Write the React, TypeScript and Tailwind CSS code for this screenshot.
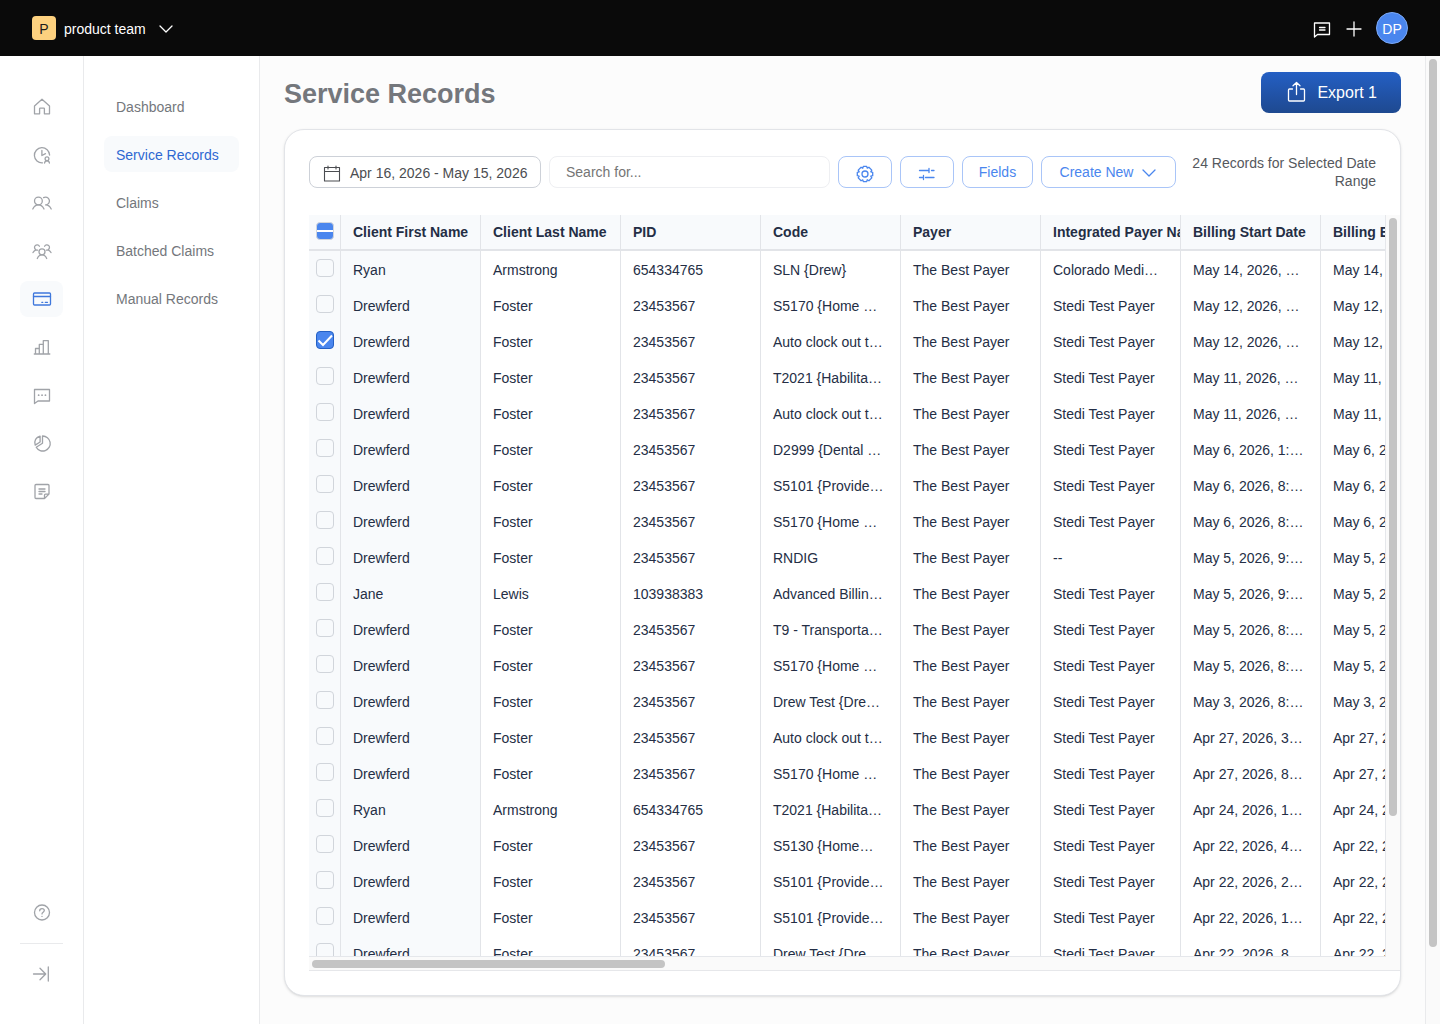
import React, { useState } from 'react';

interface RecordRow {
    first: string;
    last: string;
    pid: string;
    code: string;
    integrated: string;
    start: string;
}

const drewferd = (code: string, start: string, integrated = 'Stedi Test Payer'): RecordRow => ({
    first: 'Drewferd',
    last: 'Foster',
    pid: '23453567',
    code,
    integrated,
    start,
});

const initialRows: RecordRow[] = [
    { first: 'Ryan', last: 'Armstrong', pid: '654334765', code: 'SLN {Drew}', integrated: 'Colorado Medi…', start: 'May 14, 2026, …' },
    drewferd('S5170 {Home …', 'May 12, 2026, …'),
    drewferd('Auto clock out t…', 'May 12, 2026, …'),
    drewferd('T2021 {Habilita…', 'May 11, 2026, …'),
    drewferd('Auto clock out t…', 'May 11, 2026, …'),
    drewferd('D2999 {Dental …', 'May 6, 2026, 1:…'),
    drewferd('S5101 {Provide…', 'May 6, 2026, 8:…'),
    drewferd('S5170 {Home …', 'May 6, 2026, 8:…'),
    drewferd('RNDIG', 'May 5, 2026, 9:…', '--'),
    { first: 'Jane', last: 'Lewis', pid: '103938383', code: 'Advanced Billin…', integrated: 'Stedi Test Payer', start: 'May 5, 2026, 9:…' },
    drewferd('T9 - Transporta…', 'May 5, 2026, 8:…'),
    drewferd('S5170 {Home …', 'May 5, 2026, 8:…'),
    drewferd('Drew Test {Dre…', 'May 3, 2026, 8:…'),
    drewferd('Auto clock out t…', 'Apr 27, 2026, 3…'),
    drewferd('S5170 {Home …', 'Apr 27, 2026, 8…'),
    { first: 'Ryan', last: 'Armstrong', pid: '654334765', code: 'T2021 {Habilita…', integrated: 'Stedi Test Payer', start: 'Apr 24, 2026, 1…' },
    drewferd('S5130 {Home…', 'Apr 22, 2026, 4…'),
    drewferd('S5101 {Provide…', 'Apr 22, 2026, 2…'),
    drewferd('S5101 {Provide…', 'Apr 22, 2026, 1…'),
    drewferd('Drew Test {Dre…', 'Apr 22, 2026, 8…'),
];

const columns = ['Client First Name', 'Client Last Name', 'PID', 'Code', 'Payer', 'Integrated Payer Name', 'Billing Start Date', 'Billing End Date'];

const Icon: React.FC<{ children: React.ReactNode; className?: string }> = ({ children, className = 'w-5 h-5' }) => (
    <svg className={className} viewBox="0 0 20 20" fill="none" stroke="currentColor" strokeWidth={1.3} strokeLinecap="round" strokeLinejoin="round" aria-hidden="true">
        {children}
    </svg>
);

const Chevron: React.FC<{ className?: string }> = ({ className = 'w-4 h-4' }) => (
    <svg className={className} viewBox="0 0 16 16" fill="none" stroke="currentColor" strokeWidth={1.3} strokeLinecap="round" strokeLinejoin="round" aria-hidden="true">
        <path d="M2 6l6 6 6-6" />
    </svg>
);

const railItems = [
    {
        label: 'Home',
        icon: <path d="M2.5 9L10 2.2 17.500 9v7.800h-5.100v-5a.6.6 0 0 0-.6-.6H8.200a.6.6 0 0 0-.6.6v5H2.500z" />,
    },
    {
        label: 'Schedule',
        icon: (
            <>
                <path d="M10.5 17.900A7.600 7.600 0 1 1 17.600 10" />
                <path d="M9.900 5.500v5l3.600-1.800" />
                <circle cx="15" cy="13.8" r="1.9" />
                <path d="M12.6 18c.1-1.400 1-2.200 2.400-2.200s2.300.8 2.400 2.200" />
            </>
        ),
    },
    {
        label: 'Clients',
        icon: (
            <>
                <circle cx="6.4" cy="8" r="3.9" />
                <path d="M.8 16c1.300-2.700 3.100-4.100 5.600-4.100s4.300 1.400 5.600 4.100" />
                <path d="M11.6 4.600a3.900 3.900 0 1 1 2 7.300c2.500 0 4.300 1.400 5.600 4.100" />
            </>
        ),
    },
    {
        label: 'Teams',
        icon: (
            <>
                <circle cx="10" cy="10.8" r="3" />
                <path d="M5.300 17.500c1-2.400 2.600-3.600 4.700-3.600s3.700 1.200 4.700 3.600" />
                <path d="M7.400 5.200A2.600 2.600 0 1 0 4 8.800C2.700 9.200 1.700 10 1 11.600M4 8.800l1.600.3" />
                <path d="M12.600 5.200A2.600 2.600 0 1 1 16 8.800c1.300.4 2.300 1.200 3 2.800M16 8.800l-1.600.3" />
            </>
        ),
    },
    {
        label: 'Billing',
        icon: (
            <>
                <rect x="1.5" y="4" width="17" height="12" rx="1" />
                <path d="M1.500 7.500h17M9.800 13.300h1M13.300 13.300h2.200" />
            </>
        ),
    },
    {
        label: 'Reports',
        icon: <path d="M2.300 17h15.500M3.500 17v-5.500h3.800V17M7.300 17V7.400h4V17M11.300 17V3.600h5V17" />,
    },
    {
        label: 'Messages',
        icon: (
            <>
                <path d="M2.500 4.500h15V16H6l-3.500 2.500z" />
                <path d="M6.600 10.200h.1M10 10.200h.1M13.400 10.200h.1" strokeWidth={1.7} />
            </>
        ),
    },
    {
        label: 'Analytics',
        icon: (
            <>
                <path d="M10.500 3v7.200l-6.300 4A7.500 7.500 0 1 0 10.500 3z" />
                <path d="M8.100 3.100v5.900l-4.900 3.100C1.800 7.900 4 4.200 8.100 3.100z" />
            </>
        ),
    },
    {
        label: 'Notes',
        icon: (
            <>
                <path d="M17 13.100V4.500a1 1 0 0 0-1-1H4a1 1 0 0 0-1 1v12a1 1 0 0 0 1 1h8.500zM12.500 17.500v-3.400a1 1 0 0 1 1-1H17" />
                <path d="M7 8h6M7 10.500h6M7 13h3" />
            </>
        ),
    },
];

const RailButton: React.FC<{ label: string; active?: boolean; children: React.ReactNode }> = ({ label, active, children }) => (
    <button
        aria-label={label}
        className={`flex h-9 w-full shrink-0 items-center justify-center rounded-lg ${active ? 'bg-[#f8fafc] text-[#3f78dc]' : 'text-[#a0a3a8]'}`}
    >
        <Icon>{children}</Icon>
    </button>
);

const Checkbox: React.FC<{ label: string; checked: boolean; onChange: () => void }> = ({ label, checked, onChange }) => (
    <span className="relative ml-[7px] block h-[18px] w-[18px]">
        <input
            type="checkbox"
            aria-label={label}
            checked={checked}
            onChange={onChange}
            className="peer block h-[18px] w-[18px] appearance-none rounded border border-[#d1d5db] checked:border-[#2460c4] checked:bg-[#4a86ee]"
        />
        <svg className="pointer-events-none absolute inset-0 hidden h-[18px] w-[18px] text-white peer-checked:block" viewBox="0 0 18 18" fill="none" stroke="currentColor" strokeWidth={2}>
            <path d="M2.500 9.500l4.500 4.500 9-9.500" />
        </svg>
    </span>
);

const outlineButton = 'flex h-8 shrink-0 items-center justify-center rounded-lg border border-[#a9c5f8] text-[#4a86ee]';

const RecordsTable: React.FC = () => {
    const [selected, setSelected] = useState<number[]>([2]);

    const toggleRow = (index: number) => {
        if (selected.includes(index)) {
            setSelected(selected.filter(i => i !== index));
        } else {
            setSelected([...selected, index]);
        }
    };

    const toggleAll = () => setSelected(selected.length ? [] : initialRows.map((_, i) => i));

    return (
        <div className="grid min-h-0 flex-1 grid-cols-[minmax(0,1fr)_14px] grid-rows-[minmax(0,1fr)_14px] border-b border-[#e6e7ea]">
            <div className="overflow-hidden border-r border-[#e5e7eb]">
                <table className="w-[1152px] table-fixed border-separate border-spacing-0 text-sm text-[#242e45]">
                    <colgroup>
                        <col className="w-8" />
                        {columns.map(column => (
                            <col key={column} className="w-[140px]" />
                        ))}
                    </colgroup>
                    <thead>
                        <tr className="h-9 bg-[#f8fafc]">
                            <th className="border-r border-b-2 border-[#e2e4e8] p-0 pb-0.5">
                                <span className="relative ml-[7px] block h-[18px] w-[18px]">
                                    <input
                                        type="checkbox"
                                        aria-label="Select all records"
                                        ref={el => {
                                            if (el) el.indeterminate = selected.length > 0;
                                        }}
                                        checked={false}
                                        onChange={toggleAll}
                                        className="peer block h-[18px] w-[18px] appearance-none rounded border border-[#d1d5db] indeterminate:bg-[#4a86ee]"
                                    />
                                    <span className="pointer-events-none absolute inset-x-px top-2 hidden h-0.5 bg-white peer-indeterminate:block" />
                                </span>
                            </th>
                            {columns.map(column => (
                                <th key={column} className="overflow-hidden border-r border-b-2 border-[#e2e4e8] py-0 pl-3 text-left font-bold whitespace-nowrap">
                                    {column}
                                </th>
                            ))}
                        </tr>
                    </thead>
                    <tbody>
                        {initialRows.map((row, index) => (
                            <tr key={index} className="h-9">
                                <td className="border-r border-[#e2e4e8] bg-[#f8fafc] p-0 pb-0.5">
                                    <Checkbox label={`Select record ${index + 1}`} checked={selected.includes(index)} onChange={() => toggleRow(index)} />
                                </td>
                                {[row.first, row.last, row.pid, row.code, 'The Best Payer', row.integrated, row.start, row.start].map((value, i) => (
                                    <td
                                        key={i}
                                        className={`overflow-hidden border-r border-[#e2e4e8] pt-0.5 pb-0 pl-3 whitespace-nowrap ${i === 0 ? 'bg-[#f8fafc]' : ''}`}
                                    >
                                        {value}
                                    </td>
                                ))}
                            </tr>
                        ))}
                    </tbody>
                </table>
            </div>
            <div className="bg-[#fafafa] px-[3px] pt-[3px]">
                <div className="h-[81%] w-2 rounded-full bg-[#c4c4c4]" />
            </div>
            <div className="border-t border-[#e5e7eb] bg-[#fafafa] px-[3px] pt-[3px]">
                <div className="h-2 w-[33%] rounded-full bg-[#c4c4c4]" />
            </div>
            <div className="bg-[#fafafa]" />
        </div>
    );
};

const App: React.FC = () => {
    const [search, setSearch] = useState('');

    return (
        <div className="flex h-screen flex-col overflow-hidden bg-white font-['Liberation_Sans',Arial,sans-serif] text-sm">
            <header className="flex h-14 shrink-0 items-center justify-between bg-[#0a0a0a] px-8 text-white">
                <button className="flex items-center gap-2">
                    <span className="flex h-6 w-6 items-center justify-center rounded bg-[#fdd17f] pt-0.5 text-[#1c1c1c]">P</span>
                    <span className="pt-0.5">product team</span>
                    <Chevron className="ml-1 h-4 w-4" />
                </button>
                <div className="flex items-center gap-3">
                    <button aria-label="Feedback">
                        <Icon>
                            <path d="M2.500 5h15v11.500H5.500L2.500 19z" />
                            <path d="M7.500 9.500h5.500M7.500 12h5.500" />
                        </Icon>
                    </button>
                    <button aria-label="Add">
                        <Icon>
                            <path d="M10 4v14M3 11h14" />
                        </Icon>
                    </button>
                    <button aria-label="Account" className="flex h-8 w-8 items-center justify-center rounded-full border border-[#7ba9f7] bg-[#4a86ee] pt-0.5">
                        DP
                    </button>
                </div>
            </header>

            <div className="flex min-h-0 flex-1">
                <nav aria-label="Main" className="flex w-[84px] shrink-0 flex-col gap-3 border-r border-[#e9eaec] px-5 pt-[33px] pb-8">
                    {railItems.map(item => (
                        <RailButton key={item.label} label={item.label} active={item.label === 'Billing'}>
                            {item.icon}
                        </RailButton>
                    ))}
                    <div className="mt-auto flex flex-col gap-3">
                        <RailButton label="Help">
                            <circle cx="10" cy="9.5" r="7.5" />
                            <path d="M7.700 7.800c0-1.300 1-2.200 2.300-2.200s2.300.9 2.300 2c0 1.600-2.300 1.700-2.300 3.300M10 13.300v.1" />
                        </RailButton>
                        <hr className="border-[#e9eaec]" />
                        <RailButton label="Expand menu">
                            <path d="M1.500 10h12M8 4.200L13.700 10 8 15.800M16.300 3v14" />
                        </RailButton>
                    </div>
                </nav>

                <nav aria-label="Billing" className="flex w-44 shrink-0 flex-col gap-3 border-r border-[#e9eaec] px-5 pt-8">
                    {['Dashboard', 'Service Records', 'Claims', 'Batched Claims', 'Manual Records'].map(item => (
                        <a
                            key={item}
                            href="#"
                            className={`flex h-9 items-center rounded-lg px-3 pt-0.5 ${item === 'Service Records' ? 'bg-[#f8fafc] text-[#2e68d2]' : 'text-[#74777c]'}`}
                        >
                            {item}
                        </a>
                    ))}
                </nav>

                <main className="flex min-w-0 flex-1 flex-col gap-4 bg-[#fcfcfc] px-6 pt-4 pb-7">
                    <div className="flex items-center justify-between">
                        <h1 className="pt-0.5 text-[27px] leading-9 font-bold text-[#74777c]">Service Records</h1>
                        <button className="flex h-[41px] items-center gap-2 rounded-lg bg-linear-to-b from-[#245fc4] to-[#1e4990] px-6 text-base text-white">
                            <svg className="h-6 w-6" viewBox="0 0 24 24" fill="none" stroke="currentColor" strokeWidth={1.3} strokeLinecap="round" strokeLinejoin="round" aria-hidden="true">
                                <path d="M7.500 8H4.500a1 1 0 0 0-1 1v10a1 1 0 0 0 1 1h14a1 1 0 0 0 1-1V9a1 1 0 0 0-1-1h-3M11.500 13.500V1.500M8 4.800l3.500-3.300L15 4.800" />
                            </svg>
                            Export 1
                        </button>
                    </div>

                    <section className="flex min-h-0 flex-1 flex-col rounded-[20px] border border-[#e2e4e8] bg-white py-6 pl-6 shadow">
                        <div className="mb-[25px] flex items-center gap-2 pr-6">
                            <button className="flex h-8 w-[232px] shrink-0 items-center gap-2 rounded-lg border border-[#cdd1d8] px-3 pt-0.5 text-[#4b4d51]">
                                <Icon>
                                    <path d="M2.500 4.500h15v13.500h-15zM2.500 8.500h15M6 3v3M14 3v3" strokeWidth={1.1} />
                                </Icon>
                                Apr 16, 2026 - May 15, 2026
                            </button>
                            <input
                                type="text"
                                aria-label="Search"
                                placeholder="Search for..."
                                value={search}
                                onChange={e => setSearch(e.target.value)}
                                className="h-8 min-w-0 flex-1 rounded-lg border border-[#eeeff2] px-4 text-[#4b4d51] placeholder:text-[#757575]"
                            />
                            <button aria-label="Settings" className={`${outlineButton} w-[54px] pt-1`}>
                                <Icon>
                                    <path d="M8.300 2.300h3.400l.5 1.900 1.700-1 2.900 2.900-1 1.700 1.900.5v3.400l-1.900.5 1 1.700-2.900 2.900-1.700-1-.5 1.900H8.300l-.5-1.900-1.700 1-2.900-2.900 1-1.700-1.900-.5V8.300l1.900-.5-1-1.700 2.900-2.900 1.700 1z" />
                                    <circle cx="10" cy="10" r="3" />
                                </Icon>
                            </button>
                            <button aria-label="Filters" className={`${outlineButton} w-[54px] pt-1`}>
                                <Icon>
                                    <path d="M2.500 6.500h9.500M12 4.500v4M14.500 6.500h2.500M2.500 13.500h3M6.500 11.500v4M8.500 13.500h8.500" />
                                </Icon>
                            </button>
                            <button className={`${outlineButton} w-[71px]`}>Fields</button>
                            <button className={`${outlineButton} w-[135px] gap-2`}>
                                Create New
                                <Chevron />
                            </button>
                            <p className="w-48 shrink-0 text-right leading-[18px] text-[#55585d]">24 Records for Selected Date Range</p>
                        </div>
                        <RecordsTable />
                    </section>
                </main>

                {/* page scrollbar track */}
                <div className="w-[15px] shrink-0 border-l border-[#e9eaec] bg-[#fafafa] px-[3px] pt-[3px]">
                    <div className="h-[92%] w-2 rounded-full bg-[#c4c4c4]" />
                </div>
            </div>
        </div>
    );
};

export default App;
